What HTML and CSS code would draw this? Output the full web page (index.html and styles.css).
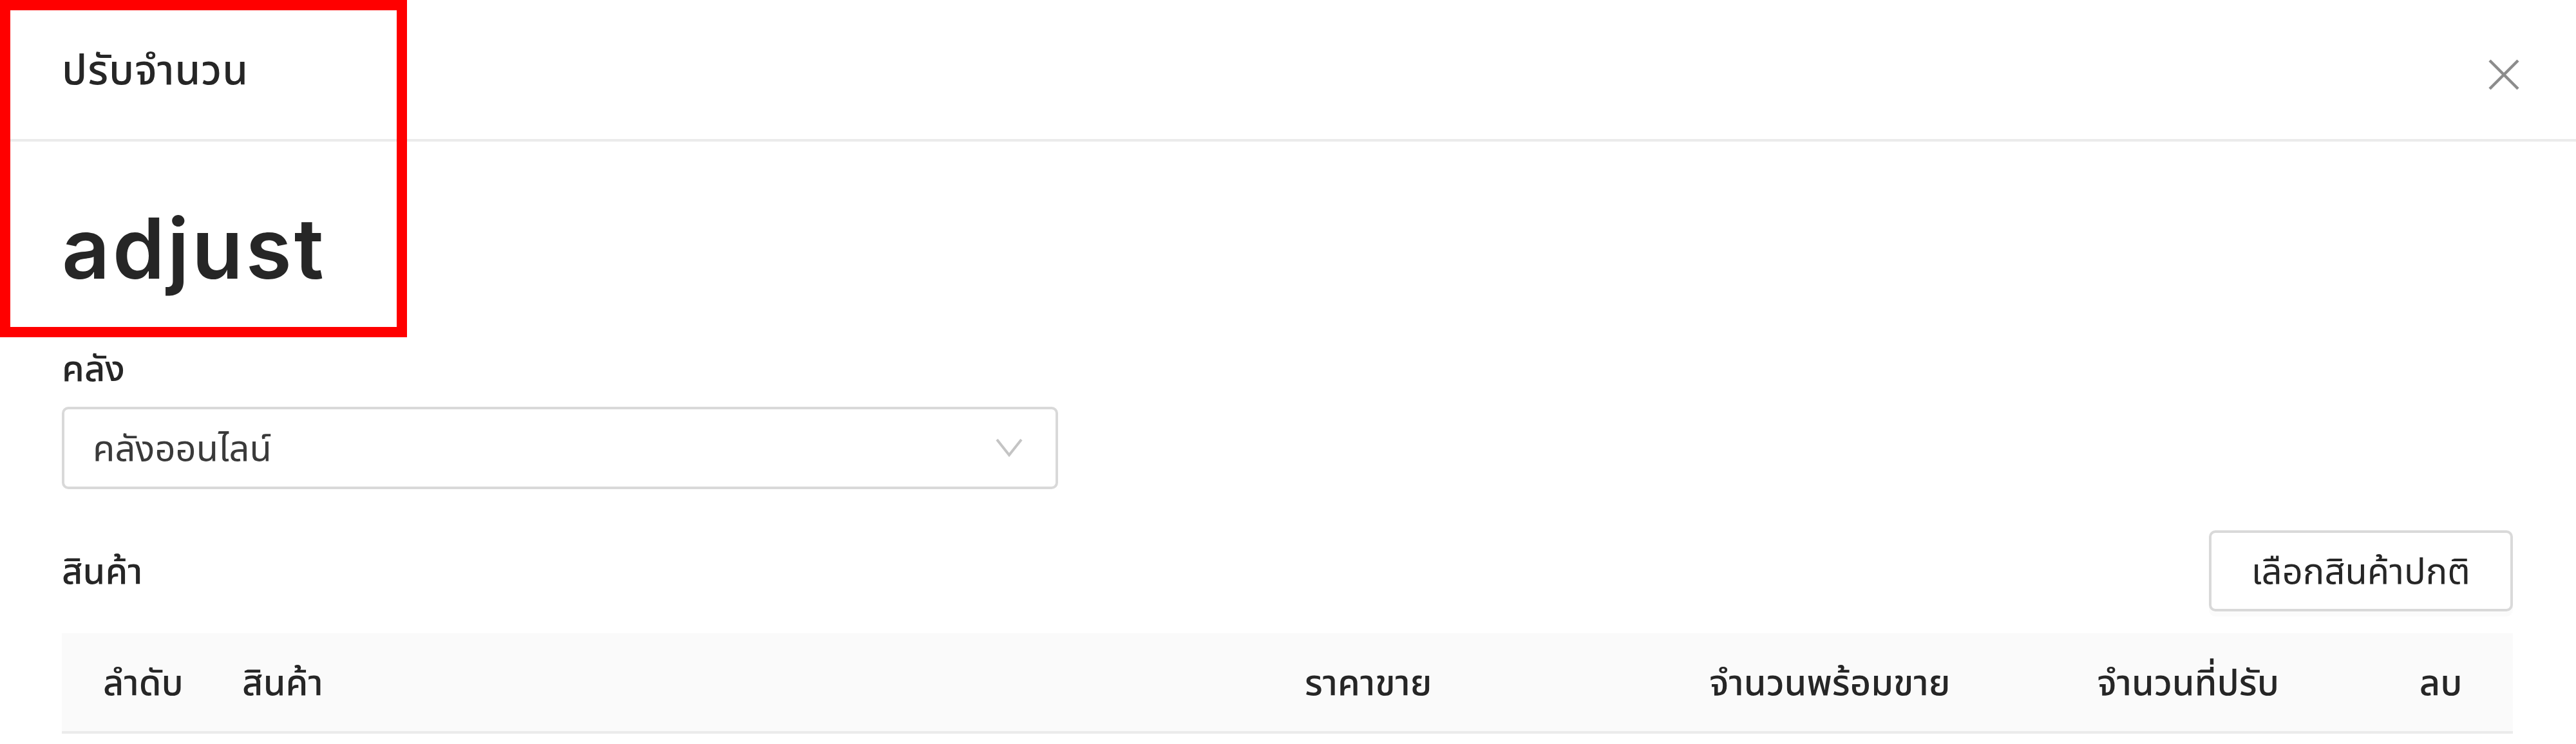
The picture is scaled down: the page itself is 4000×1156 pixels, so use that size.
FILE: index.html
```html
<!DOCTYPE html>
<html lang="th">
<head>
	<meta charset="utf-8" />
	<title>ปรับจำนวน</title>
	<link rel="stylesheet" href="styles.css">
</head>
<body>
	<div class="modal">
		<div class="modal-header">
			<div class="modal-title">ปรับจำนวน</div>
			<button class="modal-close" type="button" aria-label="Close">
				<svg width="48" height="48" viewBox="0 0 48 48">
					<path d="M2 2 L46 46 M46 2 L2 46" stroke="#8c8c8c" stroke-width="4.5" fill="none" />
				</svg>
			</button>
		</div>

		<div class="modal-body">
			<h1 class="page-title">adjust</h1>

			<div class="form-item">
				<label class="form-label">คลัง</label>
				<div class="select">
					<span class="select-value">คลังออนไลน์</span>
					<svg class="select-arrow" width="48" height="48" viewBox="0 0 48 48">
						<path d="M5 11 L24 35 L43 11" stroke="#c4c4c4" stroke-width="4" fill="none" />
					</svg>
				</div>
			</div>

			<div class="section-head">
				<span class="section-title">สินค้า</span>
				<button class="btn" type="button">เลือกสินค้าปกติ</button>
			</div>

			<table class="product-table">
				<colgroup>
					<col class="col-no">
					<col class="col-name">
					<col class="col-price">
					<col class="col-ready">
					<col class="col-adjust">
					<col class="col-del">
				</colgroup>
				<thead>
					<tr>
						<th>ลำดับ</th>
						<th>สินค้า</th>
						<th>ราคาขาย</th>
						<th>จำนวนพร้อมขาย</th>
						<th>จำนวนที่ปรับ</th>
						<th>ลบ</th>
					</tr>
				</thead>
			</table>
		</div>

		<!-- highlight marker -->
		<div class="annotation"></div>
	</div>
</body>
</html>
```

FILE: styles.css
```css
html, body {
	margin:0;
	background:#fff;
}
body {
	font-family:Inter, "Noto Sans Thai", "Noto Sans", sans-serif;
	color:#262626;
	font-size:56px;
	line-height:88px;
}
/*-------------------*/
.modal {
	position:relative;
	width:4000px;
	height:1156px;
	overflow:hidden;
}
.modal-header {
	display:flex;
	align-items:center;
	justify-content:space-between;
	height:216px;
	padding-left:96px;
	border-bottom:4px solid #ebebeb;
}
.modal-title {
	font-size:64px;
	font-weight:500;
	line-height:88px;
	letter-spacing:1px;
}
.modal-close {
	align-self:flex-start;
	display:flex;
	align-items:center;
	justify-content:center;
	width:224px;
	height:232px;
	margin-bottom:-16px;
	padding:0;
	border:0;
	background:none;
}
/*-------------------*/
.modal-body {
	padding:0 98px 0 96px;
}
.page-title {
	margin:0;
	height:292px;
	font-size:130px;
	font-weight:600;
	line-height:332px;
	letter-spacing:4px;
	box-sizing:border-box;
}
/*-------------------*/
.form-item {
	display:flex;
	flex-direction:column;
}
.form-label {
	font-weight:500;
	padding:16px 0;
}
.select {
	display:flex;
	align-items:center;
	justify-content:space-between;
	box-sizing:border-box;
	width:1547px;
	height:128px;
	padding:0 48px 0 44px;
	border:4px solid #d9d9d9;
	border-radius:10px;
}
.select-value {
	color:#3a3a3a;
}
/*-------------------*/
.section-head {
	display:flex;
	align-items:center;
	justify-content:space-between;
	margin-top:64px;
}
.section-title {
	font-weight:500;
}
.btn {
	height:126px;
	padding:0 62px;
	border:4px solid #d9d9d9;
	border-radius:10px;
	background:#fff;
	box-shadow:0 8px 0 rgba(0,0,0,.016);
	font:inherit;
	color:#262626;
}
/*-------------------*/
.product-table {
	width:100%;
	margin-top:34px;
	border-collapse:collapse;
	table-layout:fixed;
}
.col-no { width:216px; }
.col-name { width:1649px; }
.col-price { width:628px; }
.col-ready { width:602px; }
.col-adjust { width:500px; }
.col-del { width:209px; }
.product-table th {
	padding:32px 0 32px 64px;
	background:#fafafa;
	border-bottom:4px solid #ebebeb;
	font-weight:500;
	text-align:left;
	white-space:nowrap;
}
/*-------------------*/
.annotation {
	position:absolute;
	left:0;
	top:0;
	width:632px;
	height:524px;
	border:16px solid #f00;
	box-sizing:border-box;
}
```
